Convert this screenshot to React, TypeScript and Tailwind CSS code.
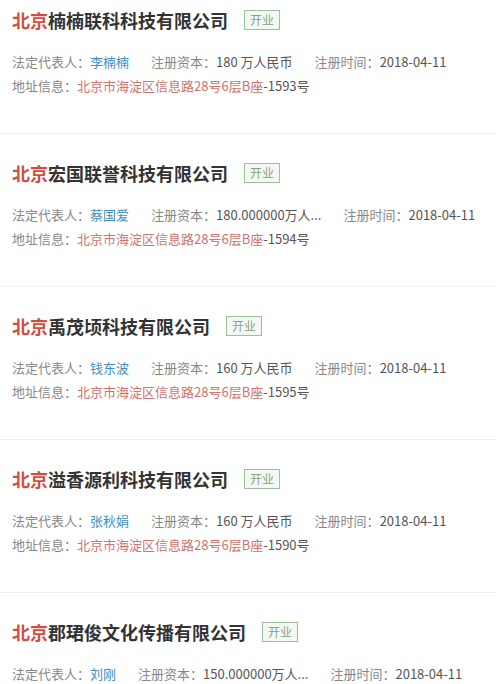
const companies = [
  { name: "楠楠联科科技有限公司", rep: "李楠楠", capital: "180 万人民币", date: "2018-04-11", no: "-1593号" },
  { name: "宏国联誉科技有限公司", rep: "蔡国爱", capital: "180.000000万人...", date: "2018-04-11", no: "-1594号" },
  { name: "禹茂顷科技有限公司", rep: "钱东波", capital: "160 万人民币", date: "2018-04-11", no: "-1595号" },
  { name: "溢香源利科技有限公司", rep: "张秋娟", capital: "160 万人民币", date: "2018-04-11", no: "-1590号" },
  { name: "郡珺俊文化传播有限公司", rep: "刘刚", capital: "150.000000万人...", date: "2018-04-11", no: "" },
];

function Card({ c, first }: { c: (typeof companies)[number]; first: boolean }) {
  return (
    <div className={`border-b border-[#eeeeee] pl-3 pb-[37px] ${first ? "pt-[9px]" : "pt-[28px]"}`}>
      <div className="flex items-center gap-4 h-[22px]">
        <h2 className="text-[18px] font-bold leading-[22px] text-[#333333]">
          <span className="text-[#cf4f42]">北京</span>
          {c.name}
        </h2>
        <span className="border border-[#9cc09c] bg-[#f3f9f1] px-[5px] text-[12px] leading-[18px] text-[#86a386]">
          开业
        </span>
      </div>
      <div className="mt-[21px] flex gap-[22px] text-[13px] leading-5 text-[#555555] whitespace-nowrap">
        <span>
          <span className="text-[#888888]">法定代表人：</span>
          <span className="text-[#3f8fbf]">{c.rep}</span>
        </span>
        <span>
          <span className="text-[#888888]">注册资本：</span>
          {c.capital}
        </span>
        <span>
          <span className="text-[#888888]">注册时间：</span>
          {c.date}
        </span>
      </div>
      <div className="mt-1 text-[13px] leading-5 text-[#555555] whitespace-nowrap">
        <span className="text-[#888888]">地址信息：</span>
        <span className="text-[#cc7470]">北京市海淀区信息路28号6层B座</span>
        {c.no}
      </div>
    </div>
  );
}

export default function App() {
  return (
    <div
      className="w-[496px] h-[684px] overflow-hidden bg-white"
      style={{ fontFamily: '"Noto Sans CJK SC", "Noto Sans", sans-serif' }}
    >
      {companies.map((c, i) => (
        <Card key={i} c={c} first={i === 0} />
      ))}
    </div>
  );
}
